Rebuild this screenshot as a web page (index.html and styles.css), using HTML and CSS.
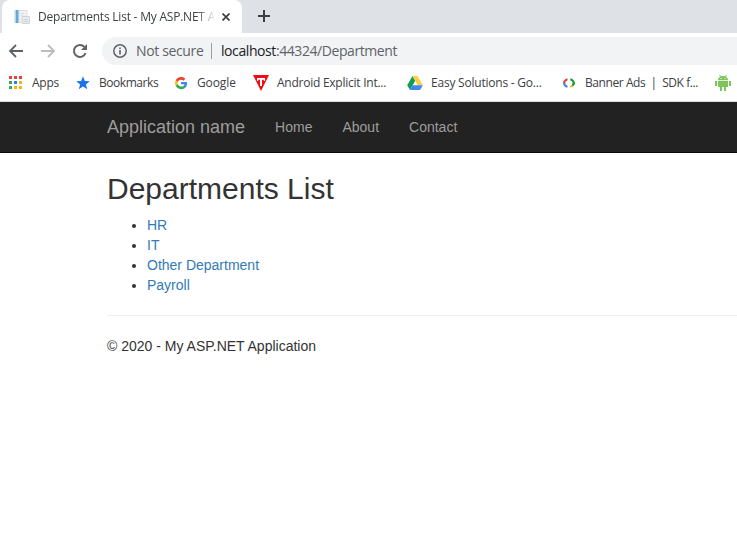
FILE: index.html
```html
<!DOCTYPE html>
<html lang="en">
<head>
<meta charset="utf-8">
<title>Departments List - My ASP.NET Application</title>
<link rel="stylesheet" href="styles.css">
</head>
<body>
<div class="tabstrip">
  <div class="tab">
    <svg class="favicon" width="16" height="16" viewBox="0 0 16 16">
      <path d="M5 1.500h8v12H5z" fill="#f1f2f3" stroke="#dcdfe1"/>
      <path d="M6.500 4.500h4M6.500 6.500h2" stroke="#dadddf"/>
      <path d="M8 7.500h7.500v7H8z" fill="#eceeef" stroke="#d0d4d7"/>
      <path d="M9.500 10.500h4.500M9.500 12.500h4.500" stroke="#c8cdd0"/>
      <path d="M1.500 1h3v13h-3z" fill="#63a9d6"/>
      <path d="M1 1v13" stroke="#b6d7eb"/>
    </svg>
    <span class="tab-title">Departments List - My ASP.NET A</span>
    <svg class="close" width="8" height="8" viewBox="0 0 8 8"><path d="M.5.5l7 7M7.500.5l-7 7" stroke="#3c4043" stroke-width="1.700"/></svg>
  </div>
  <svg class="newtab" width="12" height="12" viewBox="0 0 12 12"><path d="M6 0v12M0 6h12" stroke="#3c4043" stroke-width="2"/></svg>
</div>
<div class="toolbar">
  <svg class="tool" width="16" height="16" viewBox="0 0 16 16"><path d="M15 8H2.500M8 2L2 8 8 14" fill="none" stroke="#5f6368" stroke-width="1.800"/></svg>
  <svg class="tool" width="16" height="16" viewBox="0 0 16 16"><path d="M1 8h12.500M8 2L14 8 8 14" fill="none" stroke="#babcbe" stroke-width="1.800"/></svg>
  <svg class="tool" width="16" height="16" viewBox="0 0 16 16"><path d="M13.600 10A6 6 0 1 1 12.400 3.900" fill="none" stroke="#5f6368" stroke-width="2"/><path d="M15 1v6H9z" fill="#5f6368"/></svg>
  <div class="omnibox">
    <svg width="14" height="14" viewBox="0 0 14 14"><circle cx="7" cy="7" r="6.200" fill="none" stroke="#5f6368" stroke-width="1.500"/><path d="M7 6v4.500M7 3.500v1.500" stroke="#5f6368" stroke-width="1.600"/></svg>
    <span class="security">Not secure</span>
    <span class="divider"></span>
    <span class="url"><span class="host">localhost</span>:44324/Department</span>
  </div>
</div>
<div class="bookmarks">
  <div class="bm apps">
    <svg width="16" height="16" viewBox="0 0 16 16"><path d="M1 1h3v3H1zM6 1h3v3H6zM11 1h3v3h-3z" fill="#ea4335"/><path d="M1 6h3v3H1zM1 11h3v3H1z" fill="#34a853"/><path d="M6 6h3v3H6z" fill="#1a84f0"/><path d="M11 6h3v3h-3zM6 11h3v3H6zM11 11h3v3h-3z" fill="#fbb20b"/></svg>
    <span>Apps</span>
  </div>
  <div class="bm marks">
    <svg width="16" height="16" viewBox="0 0 16 16"><path d="M8 1.200l1.800 4.700 5 .3-3.900 3.200 1.300 4.900L8 11.600l-4.200 2.700 1.300-4.900L1.200 6.200l5-.3z" fill="#1a73e8"/></svg>
    <span>Bookmarks</span>
  </div>
  <div class="bm google">
    <svg width="16" height="16" viewBox="0 0 48 48"><path d="M24 14c3 0 5.500 1 7.500 2.900l5.600-5.600C33.700 8 29.300 6 24 6 17 6 11 10 8 16l6.500 5c1.500-4.500 5.500-7 9.500-7z" fill="#ea4335"/><path d="M42 24.400c0-1.300-.1-2.500-.4-3.700H24v7.200h10.200c-.5 2.400-1.800 4.300-3.800 5.600l6.200 4.900c3.500-3.300 5.400-8.200 5.400-14z" fill="#4285f4"/><path d="M14.500 27.500a11 11 0 0 1 0-6.700L8 15.800a18.500 18.500 0 0 0 0 16.700z" fill="#fbbc05"/><path d="M24 42.500c5 0 9.300-1.600 12.600-4.500l-6.200-4.800A11 11 0 0 1 14.500 27.500L8 32.500c3 6 9 10 16 10z" fill="#34a853"/></svg>
    <span>Google</span>
  </div>
  <div class="bm android">
    <svg width="16" height="16" viewBox="0 0 16 16"><path d="M0 0h16L8 16z" fill="#f30b13"/><path d="M4 3h8v3h-1.200V4.700H9V11H7V4.700H5.200V6H4z" fill="#fff"/></svg>
    <span>Android Explicit Int...</span>
  </div>
  <div class="bm drive">
    <svg width="16" height="16" viewBox="0 0 16 16"><path d="M5.500 1L8.200 5.700 3 15 .2 10.200z" fill="#0f9d58"/><path d="M5.500 1h5l5.300 9.200h-5.200z" fill="#ffcd40"/><path d="M5.500 10.200h10.300L13 15H3z" fill="#4285f4"/></svg>
    <span>Easy Solutions - Go...</span>
  </div>
  <div class="bm banner">
    <svg width="16" height="16" viewBox="0 0 16 16" fill="none" stroke-width="2.200"><path d="M6.500 4.200Q3.500 5 3 8" stroke="#ea4335"/><path d="M3 7.800Q3.500 11 6.500 11.800" stroke="#4285f4"/><path d="M12.800 7.500Q12.500 11 9.300 11.800" stroke="#fbbc05"/><path d="M9.300 4.200Q12.500 5 12.800 8 12.600 9.500 11.500 10.500" stroke="#149b4b"/></svg>
    <span>Banner Ads&nbsp; |&nbsp; SDK f...</span>
  </div>
  <div class="bm robot">
    <svg width="16" height="16" viewBox="0 0 16 16" fill="#7cc35a"><path d="M3 5a5 4 0 0 1 10 0zM3 5.800h10V12H3zM0 6h2v5H0zM14 6h2v5h-2zM5 12h2v4H5zM9 12h2v4H9z"/><path d="M4.500 0l2 2.500M11.500 0l-2 2.500" stroke="#7cc35a"/><path d="M5.500 3h1v1h-1zM9.500 3h1v1h-1z" fill="#fff"/></svg>
  </div>
</div>
<nav class="navbar">
  <a class="brand">Application name</a>
  <a>Home</a>
  <a>About</a>
  <a>Contact</a>
</nav>
<main class="content">
  <h2>Departments List</h2>
  <ul>
    <li><a>HR</a></li>
    <li><a>IT</a></li>
    <li><a>Other Department</a></li>
    <li><a>Payroll</a></li>
  </ul>
  <hr>
  <footer>© 2020 - My ASP.NET Application</footer>
</main>
</body>
</html>
```
FILE: styles.css
```css
* { box-sizing: border-box; }
body {
  margin: 0;
  height: 548px;
  overflow: hidden;
  background: #fff;
  color: #333;
  font: 14px/20px "Liberation Sans", Arial, sans-serif;
}
svg { display: block; flex: none; }
.tabstrip, .toolbar, .bookmarks {
  font-family: "Open Sans", "Noto Sans", sans-serif;
  white-space: nowrap;
}
.tabstrip {
  display: flex;
  height: 33px;
  background: #dee1e6;
}
.tab {
  display: flex;
  align-items: center;
  width: 240px;
  height: 33px;
  margin-left: 2px;
  padding: 0 12px;
  background: #fff;
  border-radius: 8px 8px 0 0;
}
.tab-title {
  width: 176px;
  margin-left: 8px;
  color: #3c4043;
  font-size: 12px;
  letter-spacing: -0.22px;
  -webkit-mask-image: linear-gradient(90deg, #000 158px, transparent 178px);
  mask-image: linear-gradient(90deg, #000 158px, transparent 178px);
}
.close { margin-left: 8px; }
.newtab { margin: 10px 0 0 16px; }
.toolbar {
  display: flex;
  align-items: center;
  height: 36px;
  padding-left: 8px;
}
.tool { margin-right: 16px; }
.omnibox {
  display: flex;
  flex: 1;
  align-items: center;
  height: 28px;
  margin-left: -2px;
  padding-left: 11px;
  background: #f1f3f4;
  border-radius: 14px 0 0 14px;
  color: #5f6368;
  font-size: 14px;
}
.security { width: 75px; margin-left: 9px; letter-spacing: -0.36px; }
.divider { width: 1px; height: 16px; background: #9aa0a6; }
.url { margin-left: 9px; letter-spacing: -0.42px; }
.host { color: #202124; }
.bookmarks {
  display: flex;
  height: 33px;
  padding-left: 8px;
  border-bottom: 1px solid #dadce0;
  color: #3c4043;
  font-size: 12px;
  letter-spacing: -0.25px;
}
.bm {
  display: flex;
  flex: none;
  align-items: center;
  gap: 8px;
  height: 28px;
}
.apps { width: 67px; }
.marks { width: 98px; letter-spacing: -0.45px; }
.google { width: 80px; letter-spacing: -0.1px; }
.android { width: 154px; }
.drive { width: 154px; letter-spacing: -0.22px; }
.banner { width: 154px; letter-spacing: -0.43px; }
.navbar {
  display: flex;
  align-items: center;
  height: 51px;
  padding-left: 92px;
  background: #222;
  border-bottom: 1px solid #080808;
  color: #9d9d9d;
}
.navbar a { padding: 0 15px; }
.navbar .brand { font-size: 18px; }
.content { padding: 0 0 0 107px; }
h2 {
  margin: 19px 0 10px;
  font-size: 30px;
  font-weight: 500;
  line-height: 33px;
}
ul { margin: 0 0 10px; padding-left: 40px; }
li a { color: #337ab7; }
hr { margin: 20px 0; border: 0; border-top: 1px solid #eee; }
```
